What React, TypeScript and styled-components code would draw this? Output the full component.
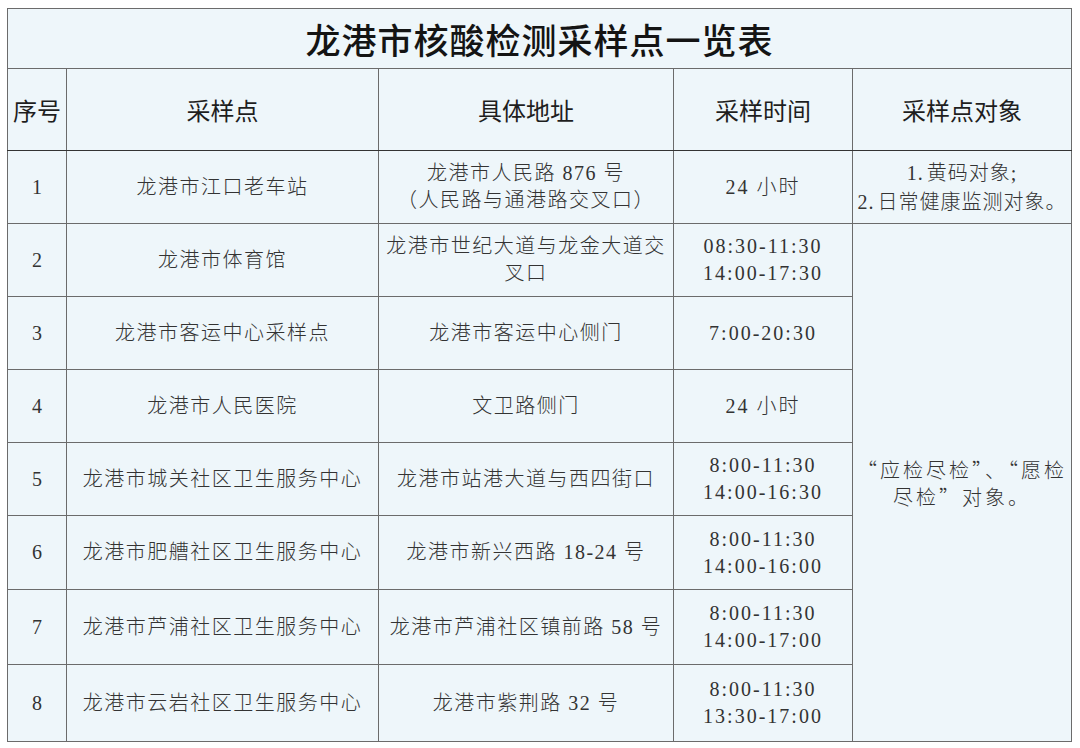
import React from "react";
import styled, { createGlobalStyle } from "styled-components";

const GlobalStyle = createGlobalStyle`
  html, body {
    margin: 0;
    padding: 0;
    background: #ffffff;
  }
  body {
    padding: 8px 10px 0 7px;
    font-family: "Liberation Serif", "Noto Sans CJK SC", serif;
  }
`;

const Table = styled.table`
  width: 1064px;
  border-collapse: collapse;
  table-layout: fixed;
  background: #eef6fa;
  color: #333333;
`;

const TitleCell = styled.th`
  height: 59px;
  border: 1px solid #6b6b6b;
  font-family: "Noto Sans CJK SC", sans-serif;
  font-size: 35px;
  font-weight: 500;
  color: #141414;
  letter-spacing: 1px;
  text-align: center;
  vertical-align: middle;
  padding: 0;
`;

const HeadCell = styled.th`
  height: 81px;
  border: 1px solid #6b6b6b;
  border-bottom-color: #333333;
  font-family: "Noto Sans CJK SC", sans-serif;
  font-size: 24px;
  font-weight: 400;
  color: #1e1e1e;
  text-align: center;
  vertical-align: middle;
  padding: 0;
`;

const Row = styled.tr<{ $h: number }>`
  height: ${(p) => p.$h}px;
`;

const Cell = styled.td`
  border: 1px solid #6b6b6b;
  font-family: "Liberation Serif", "Noto Sans CJK SC", serif;
  font-size: 20px;
  font-weight: 300;
  letter-spacing: 1.5px;
  line-height: 27px;
  text-align: center;
  vertical-align: middle;
  padding: 0 4px;
  color: #333333;
`;

const IndexCell = styled(Cell)`
  letter-spacing: 0;
  padding: 0;
`;

const TimeCell = styled(Cell)`
  letter-spacing: 2px;
  padding: 0;
`;

const TargetCell = styled(Cell)<{ $spacing: number }>`
  font-family: "Noto Sans CJK SC", serif;
  letter-spacing: ${(p) => p.$spacing}px;
  white-space: nowrap;
  padding: 0;
`;

const Latin = styled.span`
  font-family: "Liberation Serif", serif;
  letter-spacing: 1px;
`;

const Marker = styled(Latin)`
  margin-right: 3px;
`;

interface Site {
  name: string;
  addr: React.ReactNode;
  time: React.ReactNode;
  h: number;
}

const sites: Site[] = [
  {
    name: "龙港市江口老车站",
    addr: (
      <>
        龙港市人民路 876 号
        <br />
        （人民路与通港路交叉口）
      </>
    ),
    time: "24 小时",
    h: 73,
  },
  {
    name: "龙港市体育馆",
    addr: "龙港市世纪大道与龙金大道交叉口",
    time: (
      <>
        08:30-11:30
        <br />
        14:00-17:30
      </>
    ),
    h: 73,
  },
  { name: "龙港市客运中心采样点", addr: "龙港市客运中心侧门", time: "7:00-20:30", h: 73 },
  { name: "龙港市人民医院", addr: "文卫路侧门", time: "24 小时", h: 73 },
  {
    name: "龙港市城关社区卫生服务中心",
    addr: "龙港市站港大道与西四街口",
    time: (
      <>
        8:00-11:30
        <br />
        14:00-16:30
      </>
    ),
    h: 73,
  },
  {
    name: "龙港市肥艚社区卫生服务中心",
    addr: "龙港市新兴西路 18-24 号",
    time: (
      <>
        8:00-11:30
        <br />
        14:00-16:00
      </>
    ),
    h: 74,
  },
  {
    name: "龙港市芦浦社区卫生服务中心",
    addr: "龙港市芦浦社区镇前路 58 号",
    time: (
      <>
        8:00-11:30
        <br />
        14:00-17:00
      </>
    ),
    h: 75,
  },
  {
    name: "龙港市云岩社区卫生服务中心",
    addr: "龙港市紫荆路 32 号",
    time: (
      <>
        8:00-11:30
        <br />
        13:30-17:00
      </>
    ),
    h: 77,
  },
];

export default function App() {
  return (
    <>
      <GlobalStyle />
      <Table lang="zh-CN">
        <colgroup>
          <col style={{ width: 59 }} />
          <col style={{ width: 312 }} />
          <col style={{ width: 295 }} />
          <col style={{ width: 179 }} />
          <col style={{ width: 219 }} />
        </colgroup>
        <thead>
          <tr>
            <TitleCell colSpan={5}>龙港市核酸检测采样点一览表</TitleCell>
          </tr>
          <tr>
            <HeadCell>序号</HeadCell>
            <HeadCell>采样点</HeadCell>
            <HeadCell>具体地址</HeadCell>
            <HeadCell>采样时间</HeadCell>
            <HeadCell>采样点对象</HeadCell>
          </tr>
        </thead>
        <tbody>
          {sites.map((s, idx) => (
            <Row key={s.name} $h={s.h}>
              <IndexCell>{idx + 1}</IndexCell>
              <Cell>{s.name}</Cell>
              <Cell>{s.addr}</Cell>
              <TimeCell>{s.time}</TimeCell>
              {idx === 0 && (
                <TargetCell $spacing={1}>
                  <Marker>1.</Marker>黄码对象<Latin>;</Latin>
                  <br />
                  <Marker>2.</Marker>日常健康监测对象。
                </TargetCell>
              )}
              {idx === 1 && (
                <TargetCell rowSpan={7} $spacing={3}>
                  “应检尽检”、“愿检
                  <br />
                  尽检”对象。
                </TargetCell>
              )}
            </Row>
          ))}
        </tbody>
      </Table>
    </>
  );
}
